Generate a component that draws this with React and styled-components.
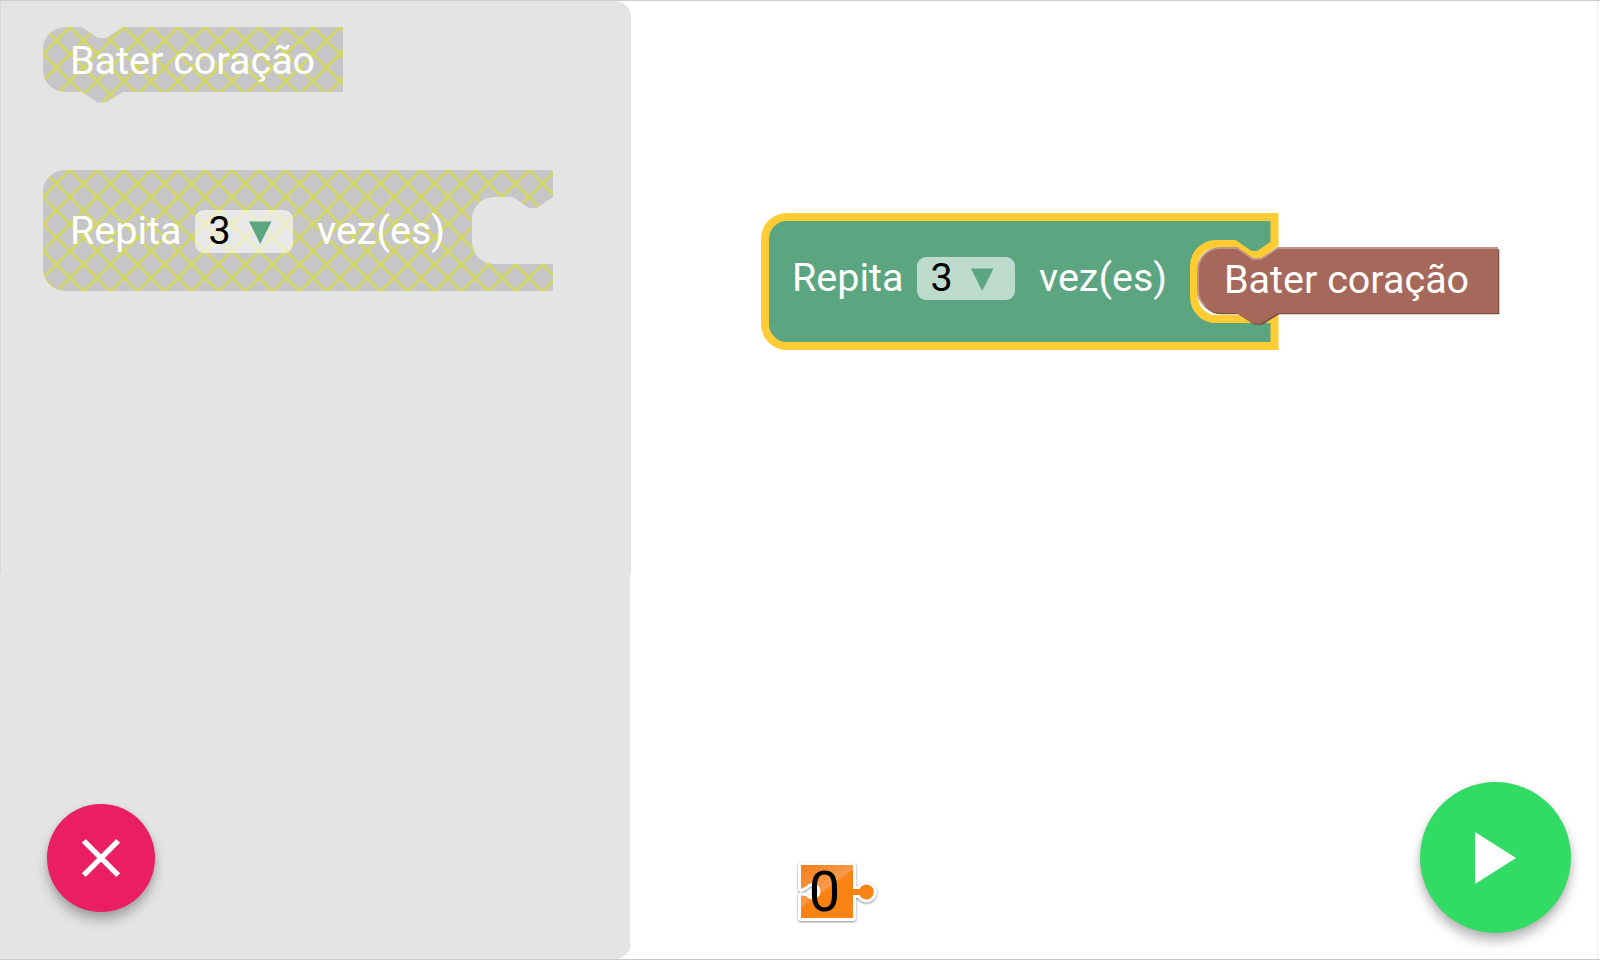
import React from "react";
import styled, { createGlobalStyle } from "styled-components";

const GlobalStyle = createGlobalStyle`
  * { box-sizing: border-box; }
  body { margin: 0; background: #fff; font-family: Roboto, "Liberation Sans", sans-serif; overflow: hidden; }
`;

const Screen = styled.div`
  display: flex;
  width: 1600px;
  height: 960px;
  padding-right: 2px;
  background: #fff;
  border-top: 1px solid #cdcdcd;
  border-bottom: 1px solid #c9c9c9;
`;

const Toolbox = styled.aside`
  display: flex;
  flex-direction: column;
  align-items: flex-start;
  width: 631px;
  height: 958px;
  padding: 26px 0 47.5px 43px;
  background:
    linear-gradient(#d8d8d8, #d8d8d8) 0 0 / 1px 572px no-repeat,
    linear-gradient(#f6f6f6, #f6f6f6) 100% 100% / 1px 386px no-repeat,
    #e4e4e4;
  border-radius: 0 16px 16px 0;
`;

const BlockList = styled.div`
  display: flex;
  flex-direction: column;
  gap: 78px;
  flex: 1;
`;

const Workspace = styled.main`
  position: relative;
  display: flex;
  align-items: flex-end;
  justify-content: space-between;
  flex: 1;
  padding: 0 26px 26px 165px;
  border-right: 1px solid #f0f0f0;
`;

const Block = styled.div`
  position: relative;
  width: ${(p) => p.$width}px;
  height: ${(p) => p.$height}px;
  padding: ${(p) => p.$top}px 0 0 ${(p) => p.$left || 27}px;
`;

const PlacedBlock = styled(Block)`
  position: absolute;
  left: ${(p) => p.$x}px;
  top: ${(p) => p.$y}px;
`;

const Shape = styled.svg`
  position: absolute;
  inset: 0;
  overflow: visible;
`;

const Row = styled.div`
  position: relative;
  display: flex;
  align-items: center;
  height: 43px;
`;

const Label = styled.span`
  padding-bottom: 2px;
  color: #fff;
  font-size: 39.5px;
  line-height: 43px;
  white-space: nowrap;
  width: ${(p) => (p.$width ? `${p.$width}px` : "auto")};
`;

const Dropdown = styled.span`
  display: flex;
  align-items: center;
  width: 98px;
  height: 43px;
  margin-right: 24px;
  padding: 0 21.5px 0 13.5px;
  justify-content: space-between;
  border-radius: 9px;
  background: rgba(255, 255, 255, 0.6);
  color: #000;
  font-size: 39.5px;
  line-height: 43px;
`;

const Value = styled.span`
  padding-bottom: 2px;
`;

const RoundButton = styled.button`
  display: flex;
  align-items: center;
  justify-content: center;
  width: ${(p) => p.$size}px;
  height: ${(p) => p.$size}px;
  padding: 0;
  border: 0;
  border-radius: 50%;
  background: ${(p) => p.$color};
  box-shadow: 0 8px 12px rgba(0, 0, 0, 0.27), 0 1px 5px rgba(0, 0, 0, 0.08);
`;

const CloseButton = styled(RoundButton)`
  margin-left: 4px;
`;

const Counter = styled.div`
  position: relative;
  width: 84px;
  height: 62px;
  margin-bottom: 9px;
`;

const Piece = styled(Shape)`
  filter: drop-shadow(0 1px 1px rgba(60, 60, 80, 0.6));
`;

const Count = styled.span`
  position: relative;
  display: block;
  width: 57px;
  text-align: center;
  color: #000;
  font-size: 56px;
  line-height: 60px;
`;

const statementPath =
  "M0 22 A22 22 0 0 1 22 0 H39 L55 11 H63 L80 0 H300 V65 H80 L63 75.5 H55 L39 65 H22 A22 22 0 0 1 0 43 Z";

const repeatPath = (w, h, cavityBottom) =>
  `M0 22 A22 22 0 0 1 22 0 H${w} V27 L${w - 16} 38 H${w - 24} L${w - 40} 27 H451 ` +
  `A22 22 0 0 0 429 49 V${cavityBottom - 22} A22 22 0 0 0 451 ${cavityBottom} H${w} V${h} H22 A22 22 0 0 1 0 ${h - 22} Z`;

const piecePath =
  "M5 3H57V27H63.5A7.5 7.5 0 1 1 63.5 33H57V56H5V33.5L10 34A8 8 0 1 0 10 24.5L5 27Z";

function Hatch({ id, d, width, height }) {
  return (
    <Shape width={width} height={height}>
      <defs>
        <pattern id={id} patternUnits="userSpaceOnUse" width="27" height="27">
          <rect width="27" height="27" fill="#c6c6c8" />
          <path d="M0 0 L27 27 M27 0 L0 27" stroke="#d3da5a" strokeWidth="2.6" />
        </pattern>
      </defs>
      <path d={d} fill={`url(#${id})`} />
    </Shape>
  );
}

function RepeatRow() {
  return (
    <Row>
      <Label $width={125}>Repita</Label>
      <Dropdown>
        <Value>3</Value>
        <svg width="23" height="24" viewBox="0 0 23 24">
          <path d="M0 1.5H22.5L11.2 24Z" fill="#5ba580" />
        </svg>
      </Dropdown>
      <Label>vez(es)</Label>
    </Row>
  );
}

export default function App() {
  return (
    <>
      <GlobalStyle />
      <Screen>
        <Toolbox>
          <BlockList>
            <Block $width={300} $height={65} $top={12.5}>
              <Hatch id="hatchBeat" d={statementPath} width={300} height={65} />
              <Row>
                <Label>Bater coração</Label>
              </Row>
            </Block>
            <Block $width={510} $height={121} $top={40}>
              <Hatch id="hatchRepeat" d={repeatPath(510, 121, 94)} width={510} height={121} />
              <RepeatRow />
            </Block>
          </BlockList>
          <CloseButton $size={108} $color="#e91e63" aria-label="Fechar">
            <svg width="40" height="40" viewBox="0 0 40 40">
              <path d="M2.8 2.8L37.2 37.2M37.2 2.8L2.8 37.2" stroke="#fff" strokeWidth="5.4" />
            </svg>
          </CloseButton>
        </Toolbox>
        <Workspace>
          <PlacedBlock $x={134} $y={216} $width={510} $height={129} $top={40}>
            <Shape width={510} height={129}>
              <path d={repeatPath(509.5, 129, 102)} fill="#5ba580" stroke="#fc3" strokeWidth="8" />
            </Shape>
            <RepeatRow />
          </PlacedBlock>
          <PlacedBlock $x={567} $y={247} $width={300} $height={65} $top={11} $left={26}>
            <Shape width={300} height={65}>
              <path d={statementPath} fill="#7d4e46" transform="translate(1.3 1.3)" />
              <path d={statementPath} fill="#a5685b" />
              <path
                d="M7 58 A22 22 0 0 1 0 43 V22 A22 22 0 0 1 22 0 H39 L55 11 H63 L80 0 H300"
                fill="none"
                stroke="#c09588"
                strokeWidth="2"
              />
            </Shape>
            <Row>
              <Label>Bater coração</Label>
            </Row>
          </PlacedBlock>
          <Counter>
            <Piece width={84} height={62} viewBox="0 0 84 62">
              <defs>
                <linearGradient id="piece" x1="0" y1="0" x2="1" y2="1">
                  <stop offset="0" stopColor="#f67e1c" />
                  <stop offset="0.38" stopColor="#f99a4c" />
                  <stop offset="0.42" stopColor="#f98212" />
                  <stop offset="1" stopColor="#fb8518" />
                </linearGradient>
              </defs>
              <path d={piecePath} fill="none" stroke="#fff" strokeWidth="6" strokeLinejoin="round" />
              <path d={piecePath} fill="url(#piece)" />
            </Piece>
            <Count>0</Count>
          </Counter>
          <RoundButton $size={151} $color="#32db64" aria-label="Executar">
            <svg width="42" height="52" viewBox="0 0 42 52">
              <path d="M0 0L41 26L0 52Z" fill="#fff" />
            </svg>
          </RoundButton>
        </Workspace>
      </Screen>
    </>
  );
}
